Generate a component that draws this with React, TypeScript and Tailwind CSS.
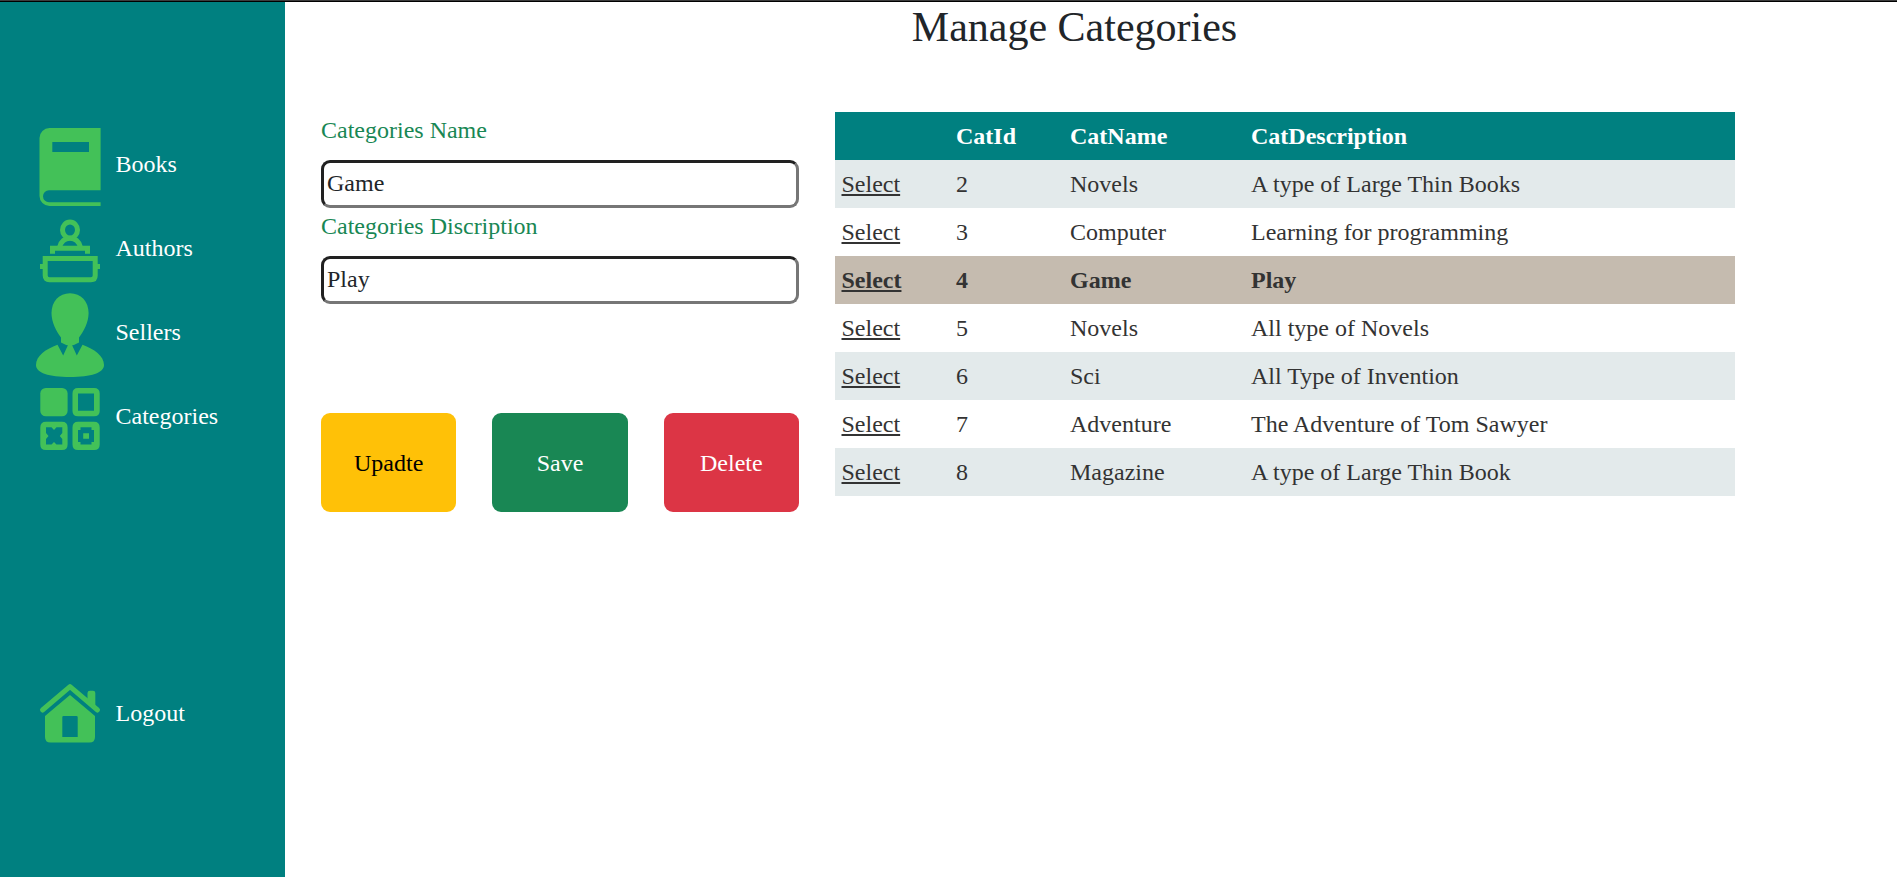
import React from "react";

const rows = [
  { id: 2, name: "Novels", desc: "A type of Large Thin Books" },
  { id: 3, name: "Computer", desc: "Learning for programming" },
  { id: 4, name: "Game", desc: "Play" },
  { id: 5, name: "Novels", desc: "All type of Novels" },
  { id: 6, name: "Sci", desc: "All Type of Invention" },
  { id: 7, name: "Adventure", desc: "The Adventure of Tom Sawyer" },
  { id: 8, name: "Magazine", desc: "A type of Large Thin Book" },
];

const selectedId = 4;

function BookIcon() {
  return (
    <svg viewBox="0 0 80 84" className="h-[84px] w-20 shrink-0 fill-[#43c158]">
      <path
        fillRule="evenodd"
        d="M19.500 6H70.600V68.300H19A6 6 0 0 0 19 80.300H70.600V84H19.500A10 10 0 0 1 9.500 74V16A10 10 0 0 1 19.500 6ZM22.300 20V30H59V20Z"
      />
    </svg>
  );
}

function AuthorIcon() {
  return (
    <svg viewBox="0 0 80 84" className="h-[84px] w-20 shrink-0 fill-none stroke-[#43c158]" strokeWidth="5">
      <ellipse cx="40" cy="24" rx="7.500" ry="8" />
      <path d="M29.700 41C31 36 34 32.300 40 32.300S49 36 50.300 41" />
      <path d="M22.500 47.700V42.300H57.500V47.700" />
      <path d="M15.200 52.500H65.200V69.500Q65.200 73.800 61 73.800H19.400Q15.200 73.800 15.200 69.500Z" />
      <path d="M15 60.500H10M65 60.500H70" />
    </svg>
  );
}

function SellerIcon() {
  return (
    <svg viewBox="0 0 80 84" className="h-[84px] w-20 shrink-0 overflow-visible fill-[#43c158]">
      <path d="M40 3.200C51 3.200 58.600 11.500 58.600 23C58.600 32 54 41 49 47.500V52.500Q45 55 40 55.800Q35 55 31 52.500V47.500C26 41 21.500 32 21.500 23C21.500 11.500 29 3.200 40 3.200Z" />
      <path d="M27.500 54.800L33.200 65.500L38 55H42L46.800 65.500L52.500 54.800C64 59 74 66 74 75C74 83 61 87 40 87S6 83 6 75C6 66 16 59 27.500 54.800Z" />
    </svg>
  );
}

function CategoryIcon() {
  return (
    <svg viewBox="0 0 80 84" className="h-[84px] w-20 shrink-0 fill-[#43c158]">
      <rect x="10.300" y="14" width="27.300" height="28.300" rx="5.500" />
      <path
        fillRule="evenodd"
        d="M48 14H64Q69.700 14 69.700 19.500V37Q69.700 42.300 64 42.300H48Q42.500 42.300 42.500 37V19.500Q42.500 14 48 14ZM48 19.500V36.700H64V19.500Z"
      />
      <path
        fillRule="evenodd"
        d="M16 47.800H32Q37.600 47.800 37.600 53.500V70.500Q37.600 76 32 76H16Q10.300 76 10.300 70.500V53.500Q10.300 47.800 16 47.800ZM16 53.300V59L18.500 62L16 65V70.500H21.500L24 68L26.500 70.500H32.300V65L29.800 62L32.300 59V53.300H26.500L24 56L21.500 53.300Z"
      />
      <path
        fillRule="evenodd"
        d="M48 47.800H64Q69.700 47.800 69.700 53.500V70.500Q69.700 76 64 76H48Q42.500 76 42.500 70.500V53.500Q42.500 47.800 48 47.800ZM50.500 53.300V56H48V68H50.500V70.500H61.500V68H64V56H61.500V53.300ZM53.200 59.200H59V64.800H53.200Z"
      />
    </svg>
  );
}

function HomeIcon() {
  return (
    <svg viewBox="0 0 80 84" className="h-[84px] w-20 shrink-0 fill-[#43c158]">
      <path
        d="M12.500 39L40 15.700L67.500 39"
        className="fill-none stroke-[#43c158]"
        strokeWidth="5"
        strokeLinecap="round"
        strokeLinejoin="round"
      />
      <path d="M57.500 30V22Q57.500 19.700 60 19.700H63Q65.300 19.700 65.300 22V37Z" />
      <path
        fillRule="evenodd"
        d="M40 24L65 45V66Q65 71.500 59.500 71.500H20.500Q15 71.500 15 66V45ZM33.500 45Q32.300 45 32.300 46.200V66H47.700V46.200Q47.700 45 46.500 45Z"
      />
    </svg>
  );
}

function NavItem({ icon, label }: { icon: React.ReactNode; label: string }) {
  return (
    <a className="flex h-[84px] items-center gap-[5.500px] pl-[30px] text-white">
      {icon}
      <span>{label}</span>
    </a>
  );
}

function Field({ label, value }: { label: string; value: string }) {
  return (
    <label className="block">
      <span className="mb-3 block text-[#198754]">{label}</span>
      <input
        defaultValue={value}
        className="block h-12 w-full rounded-[9px] border-[3px] border-t-[#212121] border-r-[#767676] border-b-[#767676] border-l-[#212121] bg-white px-[3px] pb-[2px] text-[#212529] outline-none"
      />
    </label>
  );
}

export default function App() {
  return (
    <div className="flex h-[877px] flex-col overflow-hidden bg-white font-['Liberation_Serif',serif] text-[24px] leading-[36px] text-[#212529]">
      <div className="h-[2px] shrink-0 border-b border-black bg-[#3c3c3c]" />
      <div className="flex min-h-0 flex-1">
        <nav className="flex w-[285px] shrink-0 flex-col bg-[#008080] pt-[120px]">
          <NavItem icon={<BookIcon />} label="Books" />
          <NavItem icon={<AuthorIcon />} label="Authors" />
          <NavItem icon={<SellerIcon />} label="Sellers" />
          <NavItem icon={<CategoryIcon />} label="Categories" />
          <div className="mt-[213px]">
            <NavItem icon={<HomeIcon />} label="Logout" />
          </div>
        </nav>
        <main className="w-[1543px] pl-9">
          <h1 className="mb-[59.600px] text-center text-[42px] leading-[50.400px]">
            Manage Categories
          </h1>
          <div className="flex gap-9">
            <section className="w-[478px] shrink-0">
              <Field label="Categories Name" value="Game" />
              <Field label="Categories Discription" value="Play" />
              <div className="mt-[109px] grid h-[99px] grid-cols-3 gap-9">
                <button className="rounded-[9px] bg-[#ffc107] text-black">Upadte</button>
                <button className="rounded-[9px] bg-[#198754] text-white">Save</button>
                <button className="rounded-[9px] bg-[#dc3545] text-white">Delete</button>
              </div>
            </section>
            <table className="h-[384px] w-[900px] table-fixed border-collapse text-left text-[#333333]">
              <colgroup>
                <col className="w-[115px]" />
                <col className="w-[114px]" />
                <col className="w-[181px]" />
                <col />
              </colgroup>
              <thead>
                <tr className="h-12 bg-[#008080] text-white">
                  <th className="px-1.5 py-0" />
                  <th className="px-1.5 py-0">CatId</th>
                  <th className="px-1.5 py-0">CatName</th>
                  <th className="px-1.5 py-0">CatDescription</th>
                </tr>
              </thead>
              <tbody>
                {rows.map((r) => (
                  <tr
                    key={r.id}
                    className={
                      r.id === selectedId
                        ? "h-12 bg-[#c5bbaf] font-bold"
                        : "h-12 odd:bg-[#e3eaeb] even:bg-white"
                    }
                  >
                    <td className="py-0 pr-1.5 pl-[6.500px]">
                      <a className="underline decoration-2 underline-offset-2">Select</a>
                    </td>
                    <td className="px-1.5 py-0">{r.id}</td>
                    <td className="px-1.5 py-0">{r.name}</td>
                    <td className="px-1.5 py-0">{r.desc}</td>
                  </tr>
                ))}
              </tbody>
            </table>
          </div>
        </main>
      </div>
    </div>
  );
}
